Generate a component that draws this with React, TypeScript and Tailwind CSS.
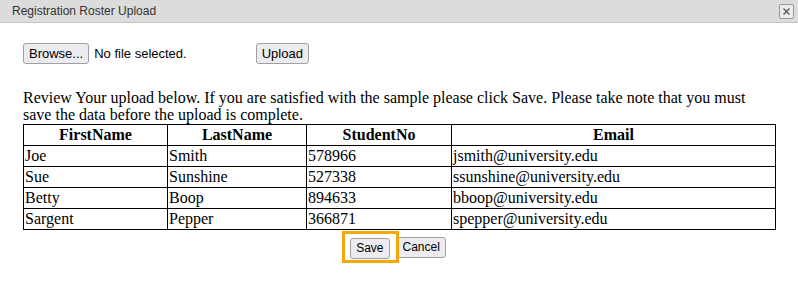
const rows = [
  ["Joe", "Smith", "578966", "jsmith@university.edu"],
  ["Sue", "Sunshine", "527338", "ssunshine@university.edu"],
  ["Betty", "Boop", "894633", "bboop@university.edu"],
  ["Sargent", "Pepper", "366871", "spepper@university.edu"],
];

const btn =
  "h-[21px] px-[5px] rounded-[3px] border border-[#a0a0a0] bg-[#ececf0] text-[13px] text-black leading-none";

const smallBtn =
  "h-[21px] px-[5px] rounded-[3px] border border-[#a0a0a0] bg-[#ececf0] text-[12px] text-black leading-none";

export default function App() {
  return (
    <div className="w-[798px] h-[288px] bg-white relative" style={{ fontFamily: '"DejaVu Sans", sans-serif' }}>
      {/* title bar */}
      <div className="h-[23px] bg-[#dcdcdc] border-b border-[#c4c4c4] flex items-center justify-between pl-[12px] pr-[4px]">
        <span className="text-[12px] text-[#333] font-['Liberation_Sans',sans-serif]">Registration Roster Upload</span>
        <span className="w-[15px] h-[15px] border border-[#999] rounded-[2px] bg-[#ededed] flex items-center justify-center">
          <svg width="9" height="9" viewBox="0 0 9 9">
            <path d="M1.5 1.5L7.5 7.5M7.5 1.5L1.5 7.5" stroke="#555" strokeWidth="1.4" />
          </svg>
        </span>
      </div>

      <div className="px-[23px] font-['Liberation_Sans',sans-serif]">
        <div className="flex items-center mt-[20px] h-[21px]">
          <button className={btn}>Browse...</button>
          <span className="ml-[5px] text-[13px]">No file selected.</span>
          <button className={btn + " ml-[69px]"}>Upload</button>
        </div>

        <p className="mt-[25px] text-[16px] leading-[17px] text-black font-['Liberation_Serif',serif] w-[740px]">
          Review Your upload below. If you are satisfied with the sample please click Save. Please take note that you must save the data before the upload is complete.
        </p>

        <table className="border-collapse w-[753px] mt-[1px] text-[16px] font-['Liberation_Serif',serif] text-black">
          <thead>
            <tr className="h-[21px]">
              <th className="border border-black w-[144px] font-bold leading-[18px] p-0">FirstName</th>
              <th className="border border-black w-[139px] font-bold leading-[18px] p-0">LastName</th>
              <th className="border border-black w-[145px] font-bold leading-[18px] p-0">StudentNo</th>
              <th className="border border-black font-bold leading-[18px] p-0">Email</th>
            </tr>
          </thead>
          <tbody>
            {rows.map((r) => (
              <tr key={r[2]} className="h-[21px]">
                {r.map((c, i) => (
                  <td key={i} className="border border-black px-[1px] py-0 leading-[18px]">
                    {c}
                  </td>
                ))}
              </tr>
            ))}
          </tbody>
        </table>

        <div className="flex justify-center mt-[1px] pr-[10px]">
          <div className="flex items-center">
            <div className="border-[3px] border-[#f5a70a] pt-[1px] pb-[1px] pr-[6px] pl-[5px] relative z-10">
              <button className={smallBtn + " h-[20px]"}>Save</button>
            </div>
            <button className={smallBtn + " -ml-[2px]"}>Cancel</button>
          </div>
        </div>
      </div>
    </div>
  );
}
